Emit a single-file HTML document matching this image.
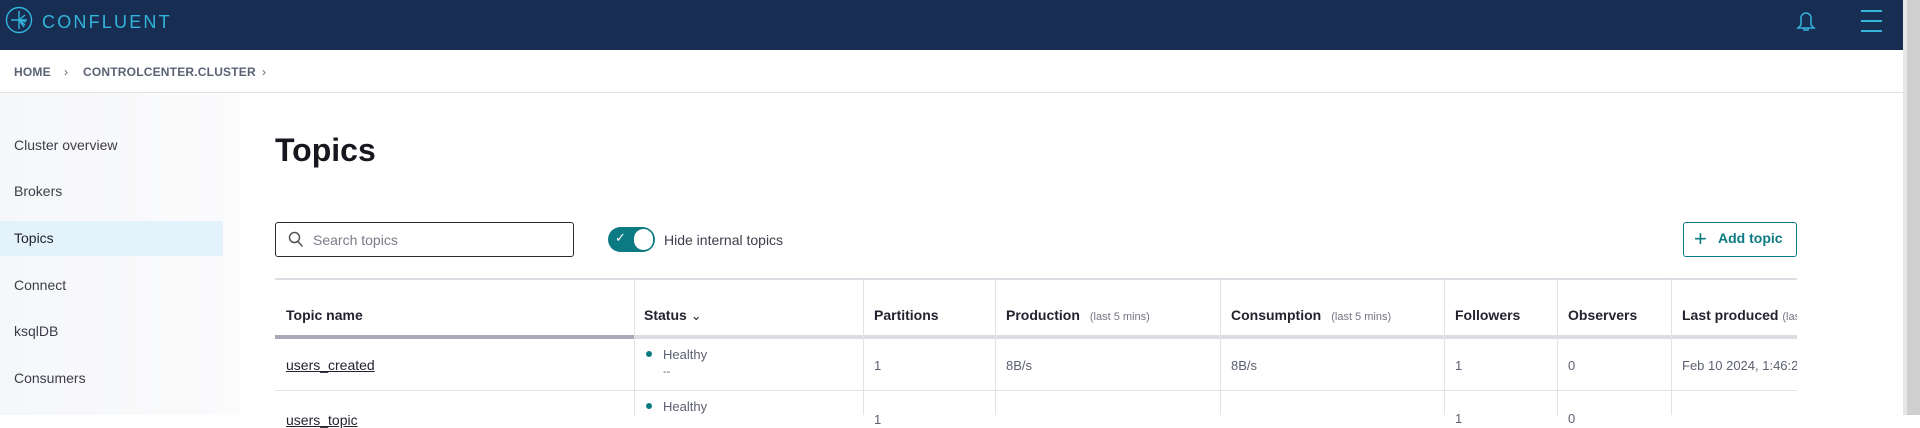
<!DOCTYPE html>
<html><head><meta charset="utf-8"><style>
*{margin:0;padding:0;box-sizing:border-box}
body{width:1920px;height:415px;overflow:hidden;background:#fff;font-family:"Liberation Sans",sans-serif;position:relative;color:#1f1f2e}
.abs{position:absolute}
#hdr{left:0;top:0;width:1903px;height:50px;background:#172d52}
#sb{left:1903px;top:0;width:17px;height:415px;background:#cfcfcf;border-left:4px solid #e6e6e6}
.crumb{top:65px;font-size:12px;font-weight:bold;color:#5b6275;letter-spacing:.2px}
#side{left:0;top:93px;width:240px;height:322px;background:linear-gradient(90deg,#f6f7f9,#fbfbfc)}
.nav{left:14px;font-size:14px;color:#3d3d4a}
.th{top:307px;font-size:14px;font-weight:bold;color:#22232e}
.th small{font-size:11px;color:#737584;font-weight:normal;margin-left:10px}
.td{font-size:13px;color:#5d6070}
.vl{width:1px;background:#e2e3e8;top:279px;height:136px}
</style></head><body>
<div id="hdr" class="abs">
<svg class="abs" style="left:5px;top:6px" width="30" height="30" viewBox="0 0 30 30" fill="none" stroke="#34b4dc" stroke-width="1.4"><circle cx="14" cy="14" r="12.5"/><path d="M14 5v18M6 14h16M14 14l6-5M14 14l6 5M14 14l7 2M14 14l5 7"/></svg>
<div class="abs" style="left:42px;top:12px;font-size:18px;color:#34b4dc;letter-spacing:2.2px">CONFLUENT</div>
<svg class="abs" style="left:1796px;top:11px" width="20" height="22" viewBox="0 0 20 22" fill="none" stroke="#34b4dc" stroke-width="1.5"><path d="M5 14V7a5 5 0 0 1 10 0v7l3 3H2z"/><path d="M8 17v2h4v-2"/></svg>
<div class="abs" style="left:1861px;top:10px;width:21px;height:2px;background:#34b4dc"></div>
<div class="abs" style="left:1861px;top:20px;width:21px;height:2px;background:#34b4dc"></div>
<div class="abs" style="left:1861px;top:30px;width:21px;height:2px;background:#34b4dc"></div>
</div>
<div id="sb" class="abs"></div>
<div class="abs crumb" style="left:14px">HOME</div>
<div class="abs crumb" style="left:64px;font-weight:normal">›</div>
<div class="abs crumb" style="left:83px">CONTROLCENTER.CLUSTER</div>
<div class="abs crumb" style="left:262px;font-weight:normal">›</div>
<div class="abs" style="left:0;top:92px;width:1903px;height:1px;background:#e2e3e6"></div>
<div id="side" class="abs"></div>
<div class="abs" style="left:0;top:221px;width:223px;height:35px;background:#e4f3fb"></div>
<div class="abs nav" style="top:137px">Cluster overview</div>
<div class="abs nav" style="top:183px">Brokers</div>
<div class="abs nav" style="top:230px;color:#22232e">Topics</div>
<div class="abs nav" style="top:277px">Connect</div>
<div class="abs nav" style="top:323px">ksqlDB</div>
<div class="abs nav" style="top:370px">Consumers</div>
<div class="abs" style="left:275px;top:132px;font-size:32px;font-weight:bold;color:#17171f">Topics</div>
<div class="abs" style="left:275px;top:222px;width:299px;height:35px;border:1.5px solid #2b2b35;border-radius:3px"></div>
<svg class="abs" style="left:288px;top:231px" width="16" height="17" viewBox="0 0 16 17" fill="none" stroke="#555" stroke-width="1.5"><circle cx="6.5" cy="6.5" r="5"/><path d="M10 10.5l4.5 5"/></svg>
<div class="abs" style="left:313px;top:232px;font-size:14px;color:#7a7c88">Search topics</div>
<div class="abs" style="left:608px;top:227px;width:47px;height:25px;border-radius:13px;background:#0b7a83"></div>
<div class="abs" style="left:634px;top:229px;width:19px;height:21px;border-radius:10px;background:#fff"></div>
<div class="abs" style="left:615px;top:230px;font-size:13px;color:#fff">✓</div>
<div class="abs" style="left:664px;top:232px;font-size:14px;color:#3d3d4a">Hide internal topics</div>
<div class="abs" style="left:1683px;top:222px;width:114px;height:35px;border:1.5px solid #0b7a83;border-radius:3px"></div>
<div class="abs" style="left:1694px;top:226px;font-size:22px;color:#0b7a83;font-weight:300">+</div>
<div class="abs" style="left:1718px;top:230px;font-size:14px;color:#0b7a83;font-weight:bold">Add topic</div>
<div class="abs" style="left:275px;top:278px;width:1522px;height:2px;background:#dcdde3"></div>
<div class="abs" style="left:275px;top:335px;width:1522px;height:4px;background:#dcdde3"></div>
<div class="abs" style="left:275px;top:335px;width:359px;height:4px;background:#a8a9b6"></div>
<div class="abs" style="left:275px;top:390px;width:1522px;height:1px;background:#e2e3e8"></div>
<div class="abs vl" style="left:634px"></div><div class="abs vl" style="left:863px"></div><div class="abs vl" style="left:995px"></div><div class="abs vl" style="left:1220px"></div><div class="abs vl" style="left:1444px"></div><div class="abs vl" style="left:1557px"></div><div class="abs vl" style="left:1671px"></div>
<div class="abs th" style="left:286px">Topic name</div>
<div class="abs th" style="left:644px">Status <span style="font-weight:normal;font-size:13px">⌄</span></div>
<div class="abs th" style="left:874px">Partitions</div>
<div class="abs th" style="left:1006px">Production<small>(last 5 mins)</small></div>
<div class="abs th" style="left:1231px">Consumption<small>(last 5 mins)</small></div>
<div class="abs th" style="left:1455px">Followers</div>
<div class="abs th" style="left:1568px">Observers</div>
<div class="abs" style="left:1682px;top:307px;width:115px;overflow:hidden;white-space:nowrap;font-size:14px;font-weight:bold;color:#22232e">Last produced <small style="font-size:11px;color:#737584;font-weight:normal">(last</small></div>
<div class="abs" style="left:286px;top:357px;font-size:14px;color:#22232e;text-decoration:underline">users_created</div>
<div class="abs" style="left:646px;top:351px;width:6px;height:6px;border-radius:3px;background:#0b7a83"></div>
<div class="abs td" style="left:663px;top:347px">Healthy</div>
<div class="abs td" style="left:663px;top:366px;font-size:11px">--</div>
<div class="abs td" style="left:874px;top:358px">1</div>
<div class="abs td" style="left:1006px;top:358px">8B/s</div>
<div class="abs td" style="left:1231px;top:358px">8B/s</div>
<div class="abs td" style="left:1455px;top:358px">1</div>
<div class="abs td" style="left:1568px;top:358px">0</div>
<div class="abs td" style="left:1682px;top:358px;width:115px;overflow:hidden;white-space:nowrap">Feb 10 2024, 1:46:22</div>
<div class="abs" style="left:646px;top:403px;width:6px;height:6px;border-radius:3px;background:#0b7a83"></div>
<div class="abs td" style="left:663px;top:399px">Healthy</div>
<div class="abs" style="left:286px;top:412px;font-size:14px;color:#22232e;text-decoration:underline">users_topic</div>
<div class="abs td" style="left:874px;top:412px">1</div>
<div class="abs td" style="left:1455px;top:411px">1</div>
<div class="abs td" style="left:1568px;top:411px">0</div>
</body></html>
